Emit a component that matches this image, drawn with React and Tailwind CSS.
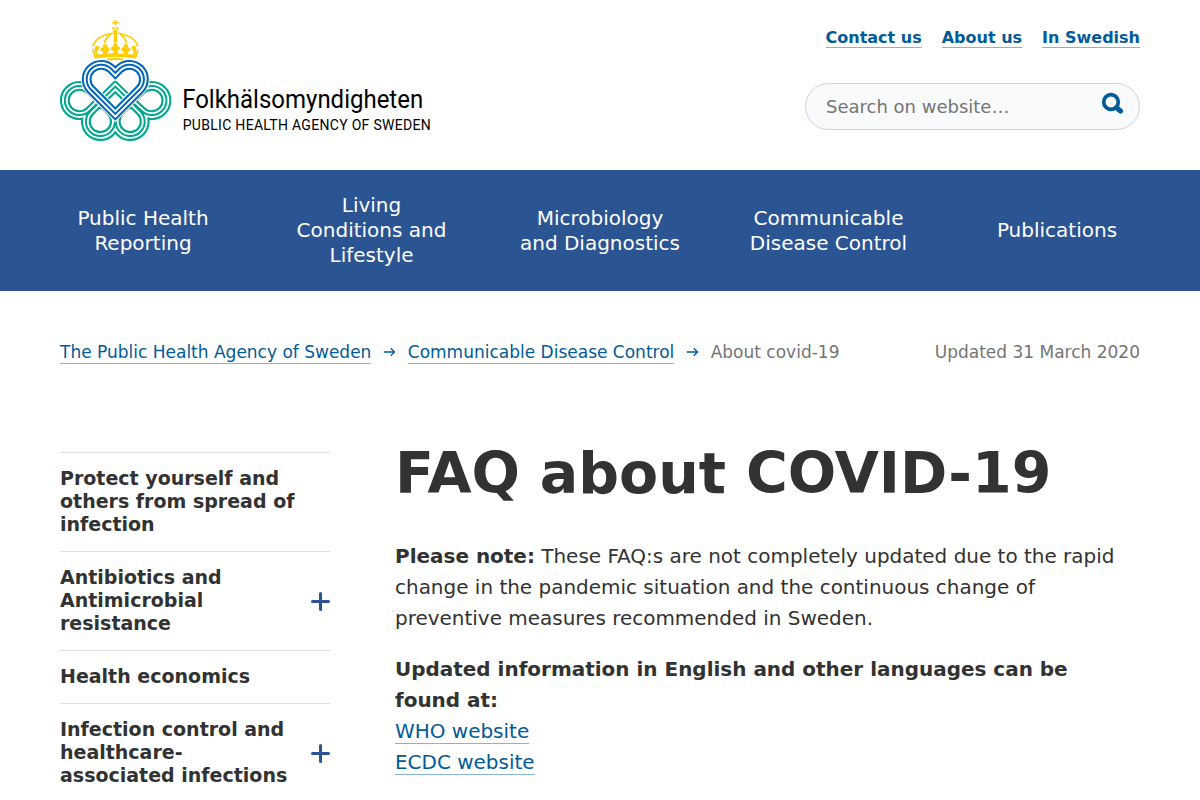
const petals =
  'M100.5 101L110.8 111.4A14.5 14.5 0 1 1 90.2 111.2L115.3 86.6L140.4 111.2A14.5 14.5 0 1 1 119.8 111.4L130.1 101M99.8 101L89.6 111A14.6 14.6 0 1 1 89.6 90L99.8 100M130.8 101L141.7 111A14.6 14.6 0 1 0 141.7 90L130.8 100';
const heart =
  'M115.3 72.9L111.2 68.8A14.5 14.5 0 0 0 90.7 89.3L115.3 113.9L139.9 89.3A14.5 14.5 0 0 0 119.4 68.8Z';

function Trefoil({ x, y }) {
  return (
    <g transform={`translate(${x} ${y})`}>
      <circle cx="0" cy="-2.3" r="2.2" />
      <circle cx="-2.3" cy="1" r="2.3" />
      <circle cx="2.3" cy="1" r="2.3" />
      <path d="M-.9 0H.9L2.600 6.500H-2.600z" />
    </g>
  );
}

function Logo() {
  return (
    <svg className="block h-[130px] w-[380px]" viewBox="58 16 380 130" role="img" aria-label="Folkhälsomyndigheten">
      <g fill="none" strokeLinejoin="miter">
        <path d={petals} stroke="#00a78e" strokeWidth="9.9" />
        <path d={petals} stroke="#fff" strokeWidth="5.7" />
        <path d={petals} stroke="#00a78e" strokeWidth="2" />
        <path d={heart} stroke="#fff" strokeWidth="11.8" />
        <path d={heart} stroke="#0067b9" strokeWidth="9.8" />
        <path d={heart} stroke="#fff" strokeWidth="5.7" />
        <path d={heart} stroke="#0067b9" strokeWidth="2" />
      </g>
      <g fill="#ffcd00">
        <path d="M114.5 20h1.8v1.900h2.400v1.700h-2.400v2h-1.800v-2h-2.400v-1.700h2.400z" />
        <path d="M112.300 27h2.200v1.400h1.800v-1.400h2.200v2.200h-6.200zM112.800 30.300h5.200v2h-5.200z" />
        <path d="M114 32h2.800l.5 10.500h-3.800zM107.300 58.500q8-1 16 0v2q-8-.8-16 0z" />
        <path d="M94 55q21.400-3.600 42.800 0l-.8 3.500q-20.600-3.400-41.200 0z" />
        <path d="M92 49.500l1.600-.5l2.200 7.500l-1.800.5zM138.800 49.500l-1.600-.5l-2.200 7.500l1.800.5z" />
        <Trefoil x={105} y={48.500} />
        <Trefoil x={115.400} y={47.500} />
        <Trefoil x={125.900} y={48.500} />
        <path d="M94.500 49q.5-3.500 3-3.200q2.500.8 1.700 3q-.4 1.700-2 2l.3 4.200l-1.800.5zM136.300 49q-.5-3.500-3-3.200q-2.500.8-1.700 3q.4 1.700 2 2l-.3 4.200l1.800.5z" />
      </g>
      <g fill="none" stroke="#ffcd00" strokeWidth="1.700">
        <path d="M93 46.500q2.500-10.500 20.500-13.500M137.800 46.500q-2.500-10.500-20.500-13.500" />
        <path d="M104.500 43q1.500-6 6.500-9M126.300 43q-1.500-6-6.500-9" />
      </g>
      <text x="182.200" y="107.500" fontFamily="Roboto, sans-serif" fontSize="25" textLength="241" lengthAdjust="spacingAndGlyphs">Folkhälsomyndigheten</text>
      <text x="182.700" y="129.500" fontFamily="Roboto, sans-serif" fontSize="14" textLength="248" lengthAdjust="spacing">PUBLIC HEALTH AGENCY OF SWEDEN</text>
    </svg>
  );
}

function Arrow() {
  return (
    <svg className="mx-[11.7px] h-[10px] w-[13px]" viewBox="0 0 13 10" fill="none" stroke="#005b99" strokeWidth="1.300">
      <path d="M.8 5H11.500M7.800 1.300L11.500 5L7.800 8.700" />
    </svg>
  );
}

const nav = [
  ['Public Health', 'Reporting'],
  ['Living', 'Conditions and', 'Lifestyle'],
  ['Microbiology', 'and Diagnostics'],
  ['Communicable', 'Disease Control'],
  ['Publications'],
];

const side = [
  { lines: ['Protect yourself and', 'others from spread of', 'infection'] },
  { lines: ['Antibiotics and', 'Antimicrobial', 'resistance'], plus: true },
  { lines: ['Health economics'] },
  { lines: ['Infection control and', 'healthcare-', 'associated infections'], plus: true },
];

const lines = (items) => items.map((t) => <span key={t} className="block whitespace-nowrap">{t}</span>);

export default function App() {
  return (
    <div className="h-[800px] w-[1200px] overflow-hidden bg-white font-['DejaVu_Sans',sans-serif] text-[#323232]">
      <header className="flex h-[170px] justify-between pt-4 pr-[60px] pl-[58px]">
        <Logo />
        <div className="flex flex-col items-end pt-[13px]">
          <div className="flex gap-5 text-[16px] leading-[18px] font-bold text-[#005b99]">
            {['Contact us', 'About us', 'In Swedish'].map((t) => (
              <a key={t} className="border-b border-[#86b4d3]">{t}</a>
            ))}
          </div>
          <div className="mt-[35px] flex h-[47px] w-[335px] items-center justify-between rounded-full border border-[#cfd3e0] bg-[#f8fafc] pr-[15px] pl-5">
            <span className="text-[18px] text-[#757575]">Search on website…</span>
            <svg className="mb-[6px] h-[23px] w-[23px]" viewBox="0 0 23 23" fill="none" stroke="#005b99" strokeLinecap="round">
              <circle cx="10" cy="10" r="7.300" strokeWidth="3.700" />
              <path d="M15.800 15.800L19.500 19" strokeWidth="5" />
            </svg>
          </div>
        </div>
      </header>
      <nav className="flex h-[121px] items-center justify-between bg-[#2b5493] px-[60px] text-center text-[20px] leading-[25px] text-white">
        {nav.map((n) => (
          <a key={n[0]} className="flex w-[166px] flex-col items-center">{lines(n)}</a>
        ))}
      </nav>
      <div className="flex h-[121px] items-center px-[60px] text-[17px] leading-[22px] text-[#757575]">
        <a className="mt-[2px] border-b border-[#8fb3cf] text-[#005b99]">The Public Health Agency of Sweden</a>
        <Arrow />
        <a className="mt-[2px] border-b border-[#8fb3cf] text-[#005b99]">Communicable Disease Control</a>
        <Arrow />
        <span>About covid-19</span>
        <span className="ml-auto">Updated 31 March 2020</span>
      </div>
      <div className="flex gap-[65px] px-[60px] pt-10">
        <aside className="w-[270px] shrink-0">
          {side.map((s) => (
            <div key={s.lines[0]} className="flex items-center justify-between border-t border-[#dcdfe9] pt-[14px] pb-[15px] text-[19px] leading-[23px] font-bold">
              <div>{lines(s.lines)}</div>
              {s.plus && (
                <svg className="mt-[2px] h-[19px] w-[19px]" viewBox="0 0 19 19" stroke="#2b5493" strokeWidth="3" strokeLinecap="round">
                  <path d="M9.500 1.500v16M1.500 9.500h16" />
                </svg>
              )}
            </div>
          ))}
        </aside>
        <main className="text-[19.980px] leading-[31px]">
          <h1 className="mt-[-14px] text-[57px] leading-[71px] font-bold">FAQ about COVID-19</h1>
          <p className="mt-8 whitespace-nowrap">
            <b>Please note:</b> These FAQ:s are not completely updated due to the rapid<br />
            change in the pandemic situation and the continuous change of<br />
            preventive measures recommended in Sweden.
          </p>
          <div className="mt-5 whitespace-nowrap">
            <b>Updated information in English and other languages can be<br />found at:</b><br />
            <a className="border-b border-[#86b4d3] text-[#005b99]">WHO website</a><br />
            <a className="border-b border-[#86b4d3] text-[#005b99]">ECDC website</a>
          </div>
        </main>
      </div>
    </div>
  );
}
